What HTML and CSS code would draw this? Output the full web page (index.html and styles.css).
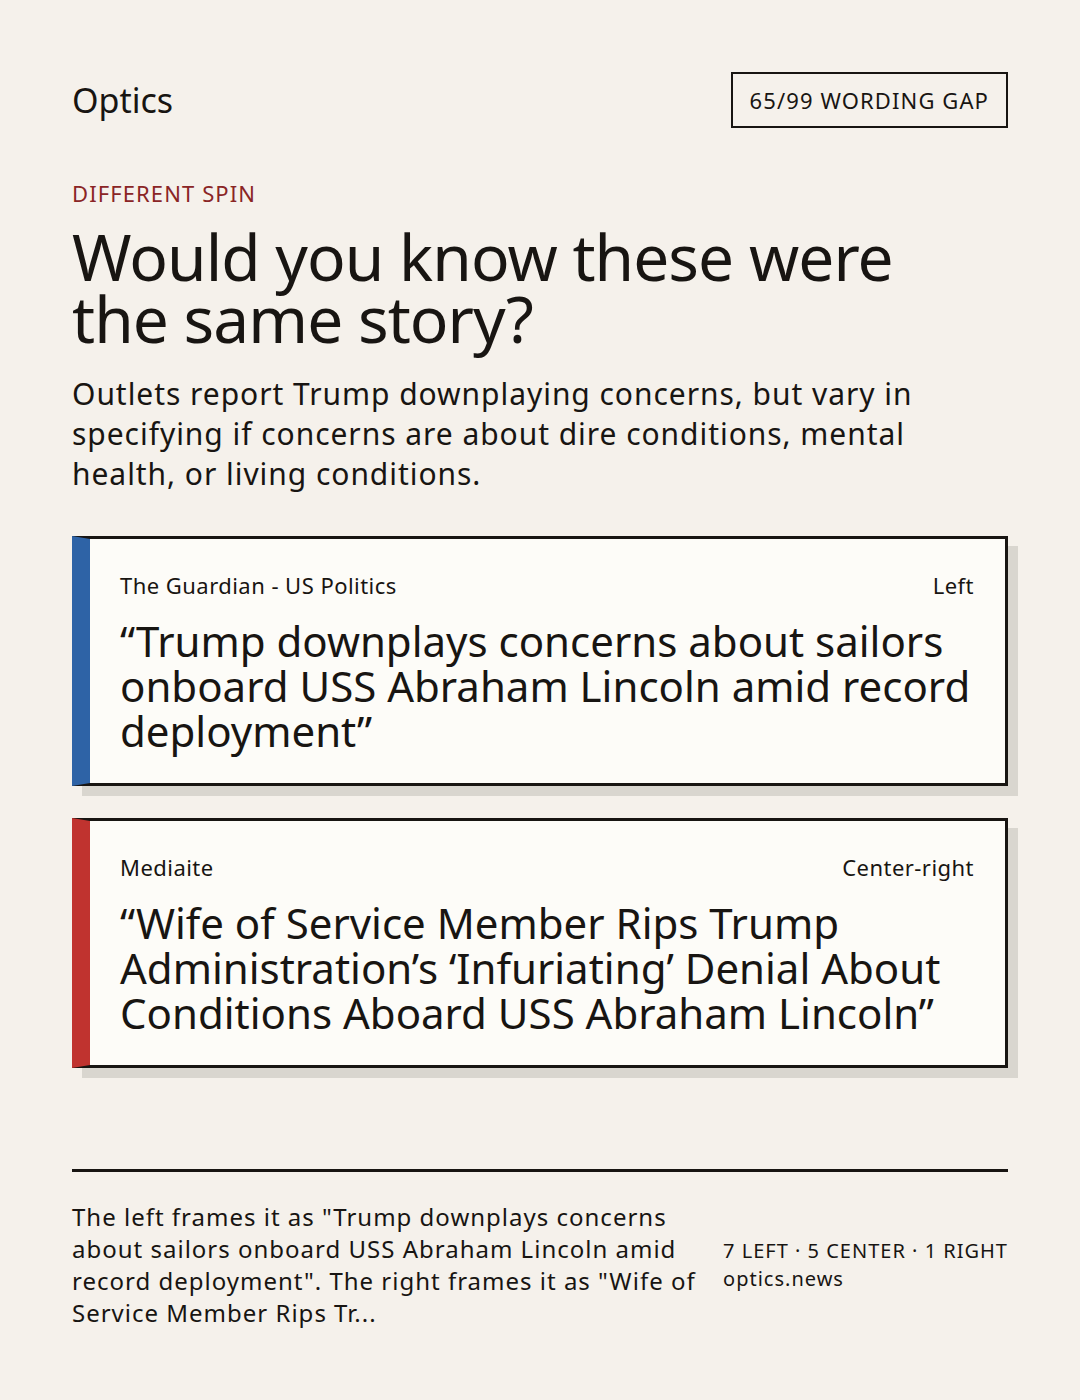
FILE: index.html
```html
<!DOCTYPE html>
<html lang="en">
<head>
<meta charset="utf-8">
<title>Optics</title>
<link rel="stylesheet" href="styles.css">
</head>
<body>
<div class="page">
  <header class="top">
    <div class="brand">Optics</div>
    <div class="badge">65/99 WORDING GAP</div>
  </header>
  <div class="kicker">DIFFERENT SPIN</div>
  <h1 class="headline">Would you know these were the same story?</h1>
  <p class="dek">Outlets report Trump downplaying concerns, but vary in specifying if concerns are about dire conditions, mental health, or living conditions.</p>
  <div class="cards">
    <article class="card card-left">
      <div class="card-meta"><span>The Guardian - US Politics</span><span>Left</span></div>
      <div class="card-quote">“Trump downplays concerns about sailors onboard USS Abraham Lincoln amid record deployment”</div>
    </article>
    <article class="card card-right">
      <div class="card-meta"><span>Mediaite</span><span>Center-right</span></div>
      <div class="card-quote">“Wife of Service Member Rips Trump Administration’s ‘Infuriating’ Denial About Conditions Aboard USS Abraham Lincoln”</div>
    </article>
  </div>
  <footer class="foot">
    <p class="summary">The left frames it as "Trump downplays concerns about sailors onboard USS Abraham Lincoln amid record deployment". The right frames it as "Wife of Service Member Rips Tr...</p>
    <div class="stats">
      <div>7 LEFT · 5 CENTER · 1 RIGHT</div>
      <div>optics.news</div>
    </div>
  </footer>
</div>
</body>
</html>
```

FILE: styles.css
```css
html, body {
  margin: 0;
  padding: 0;
}
body {
  background: #f5f1eb;
  color: #181512;
  font-family: "Noto Sans", "Open Sans", sans-serif;
  width: 1080px;
  height: 1400px;
}
.page {
  padding: 72px 72px 0 72px;
}
.top {
  display: flex;
  justify-content: space-between;
  align-items: center;
}
.brand {
  font-size: 34px;
  line-height: 56px;
}
.badge {
  border: 2px solid #181512;
  font-size: 22px;
  line-height: 28px;
  letter-spacing: 1.1px;
  padding: 12px 17px 12px 17px;
}
.kicker {
  margin-top: 50px;
  color: #8a2525;
  font-size: 22px;
  line-height: 30px;
  letter-spacing: 1.1px;
}
.headline {
  margin: 18px 0 0 0;
  max-width: 880px;
  font-weight: 400;
  font-size: 64px;
  line-height: 62px;
  letter-spacing: -0.95px;
}
.dek {
  margin: 24px 0 0 0;
  font-size: 30px;
  line-height: 40px;
  letter-spacing: 0.95px;
}
.cards {
  margin-top: 42px;
  display: flex;
  flex-direction: column;
  gap: 32px;
}
.card {
  background: #fdfcf8;
  border: 3px solid #181512;
  border-left: 18px solid #2e63a6;
  box-shadow: 10px 10px 0 #d9d6cf;
  padding: 31px 31px 27px 30px;
  min-height: 186px;
}
.card-right {
  border-left-color: #c0332f;
}
.card-meta {
  display: flex;
  justify-content: space-between;
  font-size: 22px;
  line-height: 30px;
  letter-spacing: 0.46px;
}
.card-quote {
  margin-top: 18px;
  font-size: 42px;
  line-height: 45px;
}
.foot {
  margin-top: 101px;
  border-top: 3px solid #181512;
  padding-top: 29px;
  display: flex;
  justify-content: space-between;
  align-items: center;
}
.summary {
  margin: 0;
  flex: 0 0 634px;
  font-size: 24px;
  line-height: 32px;
  letter-spacing: 1px;
}
.stats {
  flex: 0 0 auto;
  font-size: 20px;
  line-height: 28px;
  letter-spacing: 1px;
}
```
